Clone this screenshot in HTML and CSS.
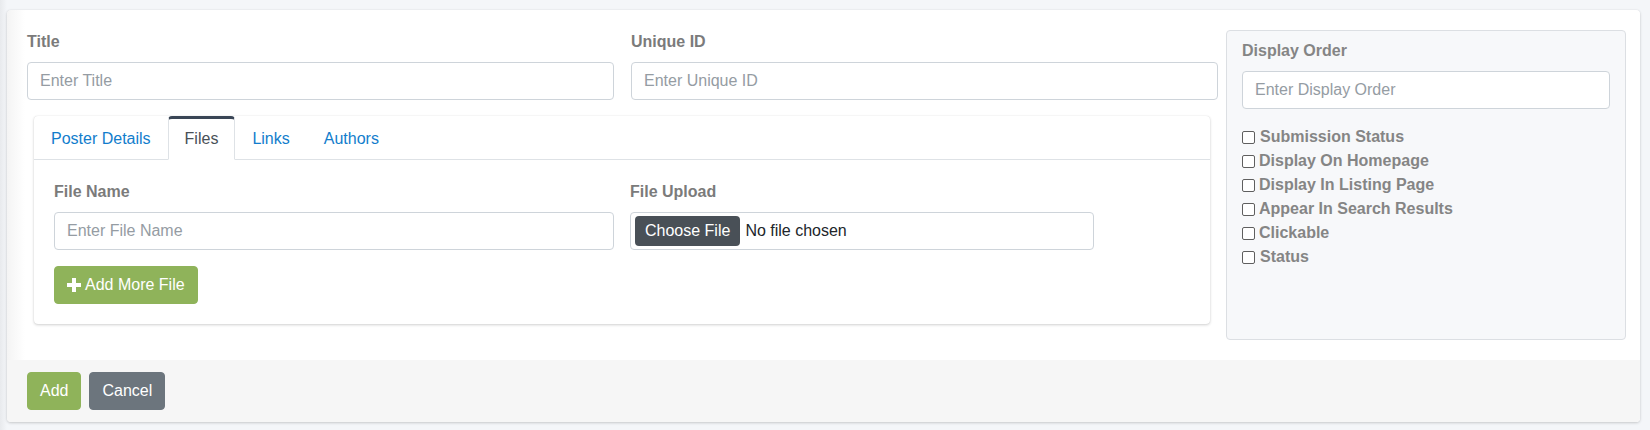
FILE: index.html
```html
<!DOCTYPE html>
<html>
<head>
<meta charset="utf-8">
<title>Add Poster</title>
<link rel="stylesheet" href="styles.css">
</head>
<body>
<div class="content">
  <div class="card">
    <div class="card-body">

      <div class="main">
        <div class="fields">
          <div class="field">
            <label>Title</label>
            <input class="input" type="text" placeholder="Enter Title">
          </div>
          <div class="field">
            <label>Unique ID</label>
            <input class="input" type="text" placeholder="Enter Unique ID">
          </div>
        </div>

        <div class="tab-card">
          <ul class="tabs">
            <li><a href="#">Poster Details</a></li>
            <li class="active"><a href="#">Files</a></li>
            <li><a href="#">Links</a></li>
            <li><a href="#">Authors</a></li>
          </ul>
          <div class="tab-body">
            <div class="file-fields">
              <div class="field">
                <label>File Name</label>
                <input class="input" type="text" placeholder="Enter File Name">
              </div>
              <div class="field">
                <label>File Upload</label>
                <div class="file-box">
                  <span class="file-btn">Choose File</span>
                  <span class="file-name">No file chosen</span>
                </div>
              </div>
            </div>
            <button class="btn btn-green" type="button">
              <svg class="plus" width="14" height="14" viewBox="0 0 14 14"><path d="M5 0h4v5h5v4H9v5H5V9H0V5h5z" fill="#fff"/></svg>
              Add More File
            </button>
          </div>
        </div>
      </div>

      <div class="side">
        <div class="field">
          <label>Display Order</label>
          <input class="input" type="text" placeholder="Enter Display Order">
        </div>
        <label class="check spaced"><input type="checkbox">Submission Status</label>
        <label class="check"><input type="checkbox">Display On Homepage</label>
        <label class="check"><input type="checkbox">Display In Listing Page</label>
        <label class="check"><input type="checkbox">Appear In Search Results</label>
        <label class="check"><input type="checkbox">Clickable</label>
        <label class="check spaced"><input type="checkbox">Status</label>
      </div>

    </div>
    <div class="card-footer">
      <button class="btn btn-green" type="button">Add</button>
      <button class="btn btn-grey" type="button">Cancel</button>
    </div>
  </div>
</div>
</body>
</html>
```

FILE: styles.css
```css
* { box-sizing: border-box; }

body {
	margin: 0;
	height: 430px;
	background: linear-gradient(to right, #e8eaed 0, #f4f6f9 7px);
	font: 16px/24px "Liberation Sans", Arial, sans-serif;
	color: #212529;
}

.content { padding: 10px 10px 0 7px; }

.card {
	background: linear-gradient(to right, #f4f4f4 0, #fff 18px);
	border-radius: 4px;
	box-shadow: 0 0 1px rgba(0,0,0,.13), 0 1px 3px rgba(0,0,0,.18);
}

.card-body {
	display: flex;
	gap: 8px;
	padding: 20px 14px 20px 20px;
}

.main { flex: 1; }

.fields {
	display: grid;
	grid-template-columns: 1fr 1fr;
	column-gap: 17px;
}

.field { margin-bottom: 16px; }

.field label {
	display: block;
	margin-bottom: 8px;
	font-weight: bold;
	color: #7b7b7b;
}

.input {
	display: block;
	width: 100%;
	height: 38px;
	padding: 6px 12px;
	border: 1px solid #ced4da;
	border-radius: 4px;
	font: inherit;
	color: #495057;
	background: #fff;
}
.input::placeholder { color: #959ca3; }

/* tabs card */
.tab-card {
	margin: 0 8px 16px 7px;
	background: #fff;
	border-radius: 4px;
	box-shadow: 0 0 1px rgba(0,0,0,.13), 0 1px 3px rgba(0,0,0,.18);
}

.tabs {
	display: flex;
	margin: 0;
	padding: 0;
	list-style: none;
	border-bottom: 1px solid #dee2e6;
}
.tabs li { margin-bottom: -1px; }
.tabs a {
	display: block;
	padding: 8px 16px;
	border: 1px solid transparent;
	border-top: 3px solid transparent;
	color: #127dcc;
	text-decoration: none;
}
.tabs .active a {
	color: #495057;
	background: #fff;
	border-color: #dee2e6 #dee2e6 #fff;
	border-top-color: #3a4656;
	border-radius: 4px 4px 0 0;
}

.tab-body { padding: 20px; }

.file-fields {
	display: grid;
	grid-template-columns: 560px 464px;
	column-gap: 16px;
}

.file-box {
	display: flex;
	align-items: center;
	height: 38px;
	padding: 0 4px;
	border: 1px solid #ced4da;
	border-radius: 4px;
}
.file-btn {
	height: 30px;
	padding: 0 10px;
	margin-right: 5px;
	line-height: 30px;
	background: #495057;
	color: #fff;
	border-radius: 4px;
}
.file-name { color: #212529; }

/* buttons */
.btn {
	display: inline-flex;
	align-items: center;
	height: 38px;
	padding: 6px 12px;
	border: 1px solid transparent;
	border-radius: 4px;
	font: inherit;
	color: #fff;
}
.btn-green { background: #8fb35a; border-color: #8fb35a; }
.btn-grey { background: #6c757d; border-color: #6c757d; }
.plus { margin-right: 4px; }

/* right panel */
.side {
	width: 400px;
	padding: 8px 15px;
	background: #f7f8fa;
	border: 1px solid #dcdfe3;
	border-radius: 4px;
}
.side .field label { color: #858585; }

.check {
	display: flex;
	align-items: center;
	font-weight: bold;
	color: #858585;
}
.check input {
	appearance: none;
	width: 13px;
	height: 13px;
	margin: 0 4px 0 0;
	border: 1px solid #5f5f5f;
	border-radius: 2px;
	background: #fff;
}
.check.spaced input { margin-right: 5px; }

.card-footer {
	display: flex;
	gap: 8px;
	padding: 12px 20px;
	background: #f6f6f6;
	border-radius: 0 0 4px 4px;
}
```
